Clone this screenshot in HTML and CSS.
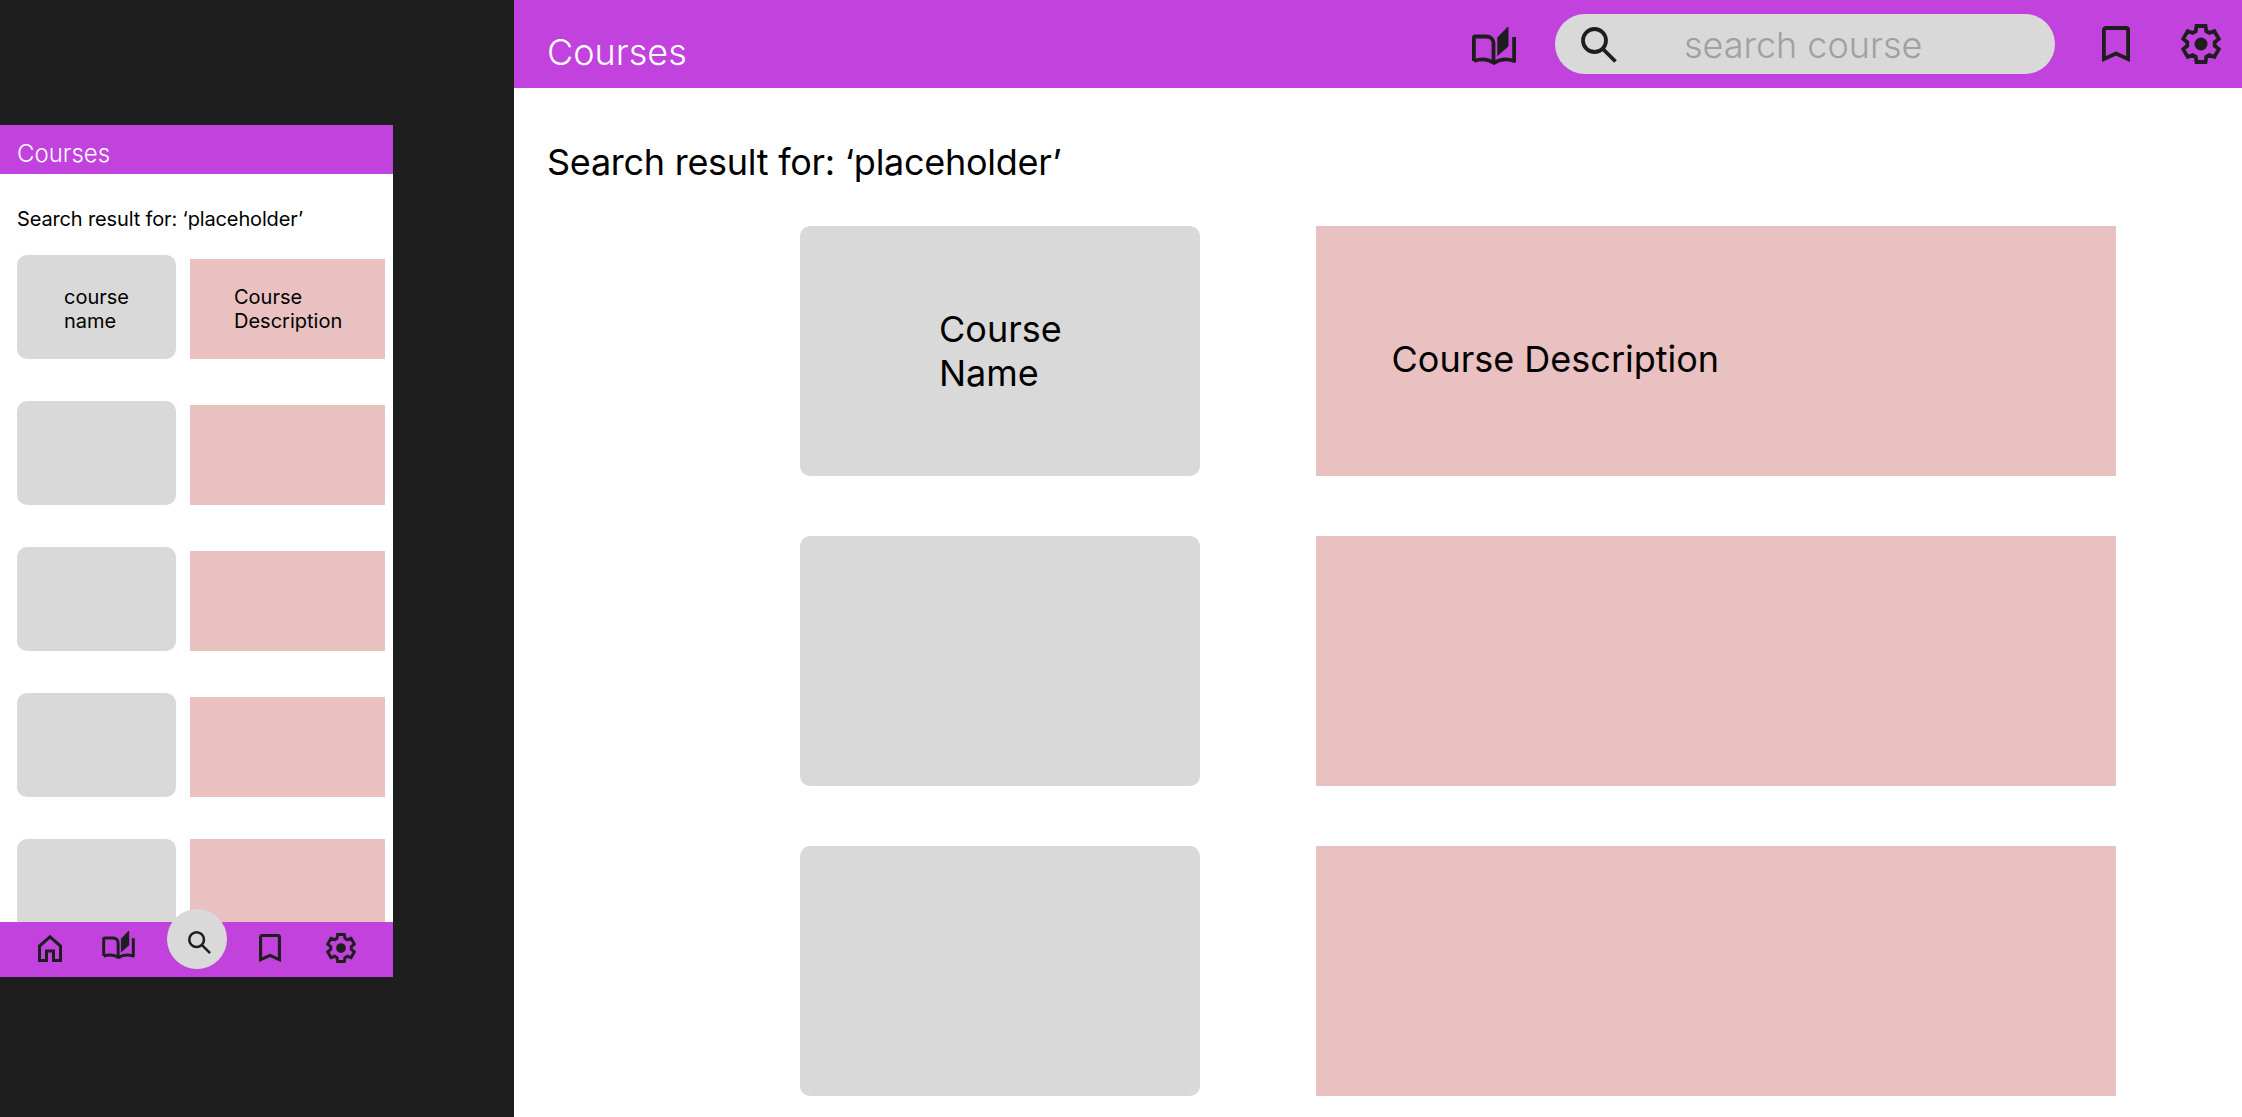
FILE: index.html
```html
<!DOCTYPE html>
<html lang="en">
<head>
    <meta charset="UTF-8">
    <meta name="viewport" content="width=device-width, initial-scale=1.0">
    <title>Courses</title>
    <link rel="stylesheet" href="styles.css">
</head>
<body>
    <svg class="icon-defs" width="0" height="0">
        <defs>
            <symbol id="icon-book" viewBox="0 0 44 38">
                <path d="M1.9 34V11a1.5 1.5 0 0 1 1.5-1.5H14c4.5 0 7.5 2.5 7.5 7V35" fill="none" stroke="currentColor"/>
                <path d="M1.9 34C9 31.5 16 32 22 36C28 32 35 31.5 42.1 34V10" fill="none" stroke="currentColor" stroke-linejoin="round"/>
                <path d="M25.3 10.5L36.5 -1V19.3L25.3 29.3z" fill="currentColor"/>
            </symbol>
            <symbol id="icon-search" viewBox="0 0 36 36">
                <circle cx="13.5" cy="13.5" r="11.5" fill="none" stroke="currentColor"/>
                <path d="M22 22L34.5 34.5" fill="none" stroke="currentColor"/>
            </symbol>
            <symbol id="icon-bookmark" viewBox="0 0 28 36">
                <path d="M1.9 33V4a2 2 0 0 1 2-2H24.1a2 2 0 0 1 2 2V33L14 27.5z" fill="none" stroke="currentColor"/>
            </symbol>
            <symbol id="icon-gear" viewBox="0 0 40 40">
                <path d="M15.5 2H24.5L25.3 7.2L28.4 9L33.3 7.1L37.8 14.9L33.7 18.2V21.8L37.8 25.1L33.3 32.9L28.4 31L25.3 32.8L24.5 38H15.5L14.7 32.8L11.6 31L6.7 32.9L2.2 25.1L6.3 21.8V18.2L2.2 14.9L6.7 7.1L11.6 9L14.7 7.2z" fill="none" stroke="currentColor"/>
                <circle cx="20" cy="20" r="6.5" fill="currentColor"/>
            </symbol>
            <symbol id="icon-home" viewBox="0 0 24 27">
                <path d="M1.5 25.5V11L12 1.8L22.5 11V25.5H15.5V16H8.5V25.5z" fill="none" stroke="currentColor"/>
            </symbol>
        </defs>
    </svg>

    <div class="mobile-column">
        <div class="mobile-frame">
            <div class="mobile-header">Courses</div>
            <div class="mobile-content">
                <p class="mobile-search-title">Search result for: ‘placeholder’</p>
                <div class="mobile-results">
                    <div class="mobile-row">
                        <div class="mobile-name"><span class="mobile-label">course<br>name</span></div>
                        <div class="mobile-desc"><span class="mobile-label">Course<br>Description</span></div>
                    </div>
                    <div class="mobile-row">
                        <div class="mobile-name"></div>
                        <div class="mobile-desc"></div>
                    </div>
                    <div class="mobile-row">
                        <div class="mobile-name"></div>
                        <div class="mobile-desc"></div>
                    </div>
                    <div class="mobile-row">
                        <div class="mobile-name"></div>
                        <div class="mobile-desc"></div>
                    </div>
                    <div class="mobile-row mobile-row-last">
                        <div class="mobile-name"></div>
                        <div class="mobile-desc"></div>
                    </div>
                </div>
            </div>
            <nav class="mobile-nav">
                <svg class="nav-home"><use href="#icon-home"/></svg>
                <svg class="nav-book"><use href="#icon-book"/></svg>
                <div class="nav-search"><svg class="nav-search-icon"><use href="#icon-search"/></svg></div>
                <svg class="nav-bookmark"><use href="#icon-bookmark"/></svg>
                <svg class="nav-gear"><use href="#icon-gear"/></svg>
            </nav>
        </div>
    </div>

    <div class="desktop">
        <header class="desktop-header">
            <div class="desktop-title">Courses</div>
            <svg class="top-book"><use href="#icon-book"/></svg>
            <div class="search-box">
                <svg class="search-icon"><use href="#icon-search"/></svg>
                <span class="search-text">search course</span>
            </div>
            <svg class="top-bookmark"><use href="#icon-bookmark"/></svg>
            <svg class="top-gear"><use href="#icon-gear"/></svg>
        </header>
        <div class="desktop-content">
            <h1 class="search-title">Search result for: ‘placeholder’</h1>
            <div class="result-row">
                <div class="course-name"><span>Course<br>Name</span></div>
                <div class="course-desc"><span>Course Description</span></div>
            </div>
            <div class="result-row">
                <div class="course-name"></div>
                <div class="course-desc"></div>
            </div>
            <div class="result-row">
                <div class="course-name"></div>
                <div class="course-desc"></div>
            </div>
        </div>
    </div>
</body>
</html>
```

FILE: styles.css
```css
* {
    box-sizing: border-box;
}
html, body {
    height: 100%;
}
body {
    margin: 0;
    display: flex;
    overflow: hidden;
    background-color: #1e1e1e;
    color: #000;
    font-family: Inter, "Noto Sans", sans-serif;
}
.icon-defs {
    position: absolute;
}
svg {
    display: block;
    flex-shrink: 0;
    color: #1e1e1e;
    stroke-width: 3.8;
}

/* mobile frame on the left */
.mobile-column {
    width: 514px;
    flex-shrink: 0;
    padding-top: 125px;
}
.mobile-frame {
    width: 393px;
    height: 852px;
    display: flex;
    flex-direction: column;
    background-color: #fff;
}
.mobile-header {
    height: 49px;
    padding: 14px 0 0 17px;
    background-color: #c142dc;
    color: #fff;
    font-size: 24px;
    font-weight: 300;
    line-height: 29px;
}
.mobile-content {
    flex: 1;
    min-height: 0;
    overflow: hidden;
    padding: 33px 8px 0 17px;
}
.mobile-search-title {
    margin: 0 0 24px;
    font-size: 20px;
    line-height: 24px;
    letter-spacing: -0.14px;
}
.mobile-row {
    display: flex;
    align-items: flex-end;
    gap: 14px;
    height: 104px;
    margin-bottom: 42px;
}
.mobile-name {
    width: 159px;
    height: 104px;
    display: flex;
    align-items: center;
    padding: 4px 0 0 47px;
    background-color: #d9d9d9;
    border-radius: 10px;
}
.mobile-desc {
    width: 195px;
    height: 100px;
    display: flex;
    align-items: center;
    padding-left: 44px;
    background-color: #eac1c1;
}
.mobile-row-last .mobile-desc {
    height: 104px;
}
.mobile-label {
    font-size: 20px;
    line-height: 24px;
}
.mobile-nav {
    position: relative;
    height: 55px;
    flex-shrink: 0;
    display: flex;
    align-items: flex-start;
    background-color: #c142dc;
}
.mobile-nav svg {
    stroke-width: 4;
}
.mobile-nav .nav-home {
    width: 24px;
    height: 27px;
    margin: 13px 0 0 38px;
    stroke-width: 3;
}
.nav-book {
    width: 33px;
    height: 28px;
    margin: 9px 0 0 40px;
}
.nav-search {
    position: absolute;
    left: 167px;
    top: -13px;
    width: 60px;
    height: 60px;
    padding: 22px 0 0 21px;
    border-radius: 50%;
    background-color: #d9d9d9;
}
.nav-search-icon {
    width: 23px;
    height: 23px;
}
.nav-bookmark {
    width: 22px;
    height: 28px;
    margin: 12px 0 0 124px;
}
.nav-gear {
    width: 30px;
    height: 30px;
    margin: 11px 0 0 45px;
}

/* desktop page on the right */
.desktop {
    flex: 1;
    min-width: 0;
    background-color: #fff;
}
.desktop-header {
    height: 88px;
    display: flex;
    align-items: flex-start;
    background-color: #c142dc;
}
.desktop-title {
    width: 958px;
    padding: 30px 0 0 33px;
    color: #fff;
    font-size: 36px;
    font-weight: 300;
    line-height: 44px;
}
.top-book {
    width: 44px;
    height: 38px;
    margin-top: 27px;
}
.search-box {
    width: 500px;
    height: 60px;
    margin: 14px 0 0 39px;
    display: flex;
    align-items: center;
    background-color: #d9d9d9;
    border-radius: 30px;
}
.search-icon {
    width: 36px;
    height: 36px;
    margin: 2px 0 0 26px;
}
.search-text {
    margin: 2px 0 0 67px;
    color: #a0a0a0;
    font-size: 36px;
    font-weight: 300;
}
.top-bookmark {
    width: 28px;
    height: 36px;
    margin: 26px 0 0 47px;
}
.top-gear {
    width: 40px;
    height: 40px;
    margin: 24px 0 0 51px;
}
.desktop-content {
    padding: 52px 0 0 33px;
}
.search-title {
    margin: 0 0 42px;
    font-size: 36px;
    font-weight: 400;
    line-height: 44px;
    letter-spacing: -0.27px;
}
.result-row {
    display: flex;
    gap: 115.5px;
    height: 250px;
    margin: 0 0 60px 253px;
}
.course-name {
    width: 400px;
    display: flex;
    align-items: center;
    padding-left: 139px;
    background-color: #d9d9d9;
    border-radius: 10px;
    font-size: 36px;
    line-height: 44px;
}
.course-desc {
    width: 800px;
    display: flex;
    align-items: center;
    padding: 16px 0 0 76px;
    background-color: #eac1c1;
    font-size: 36px;
    line-height: 44px;
}
```
